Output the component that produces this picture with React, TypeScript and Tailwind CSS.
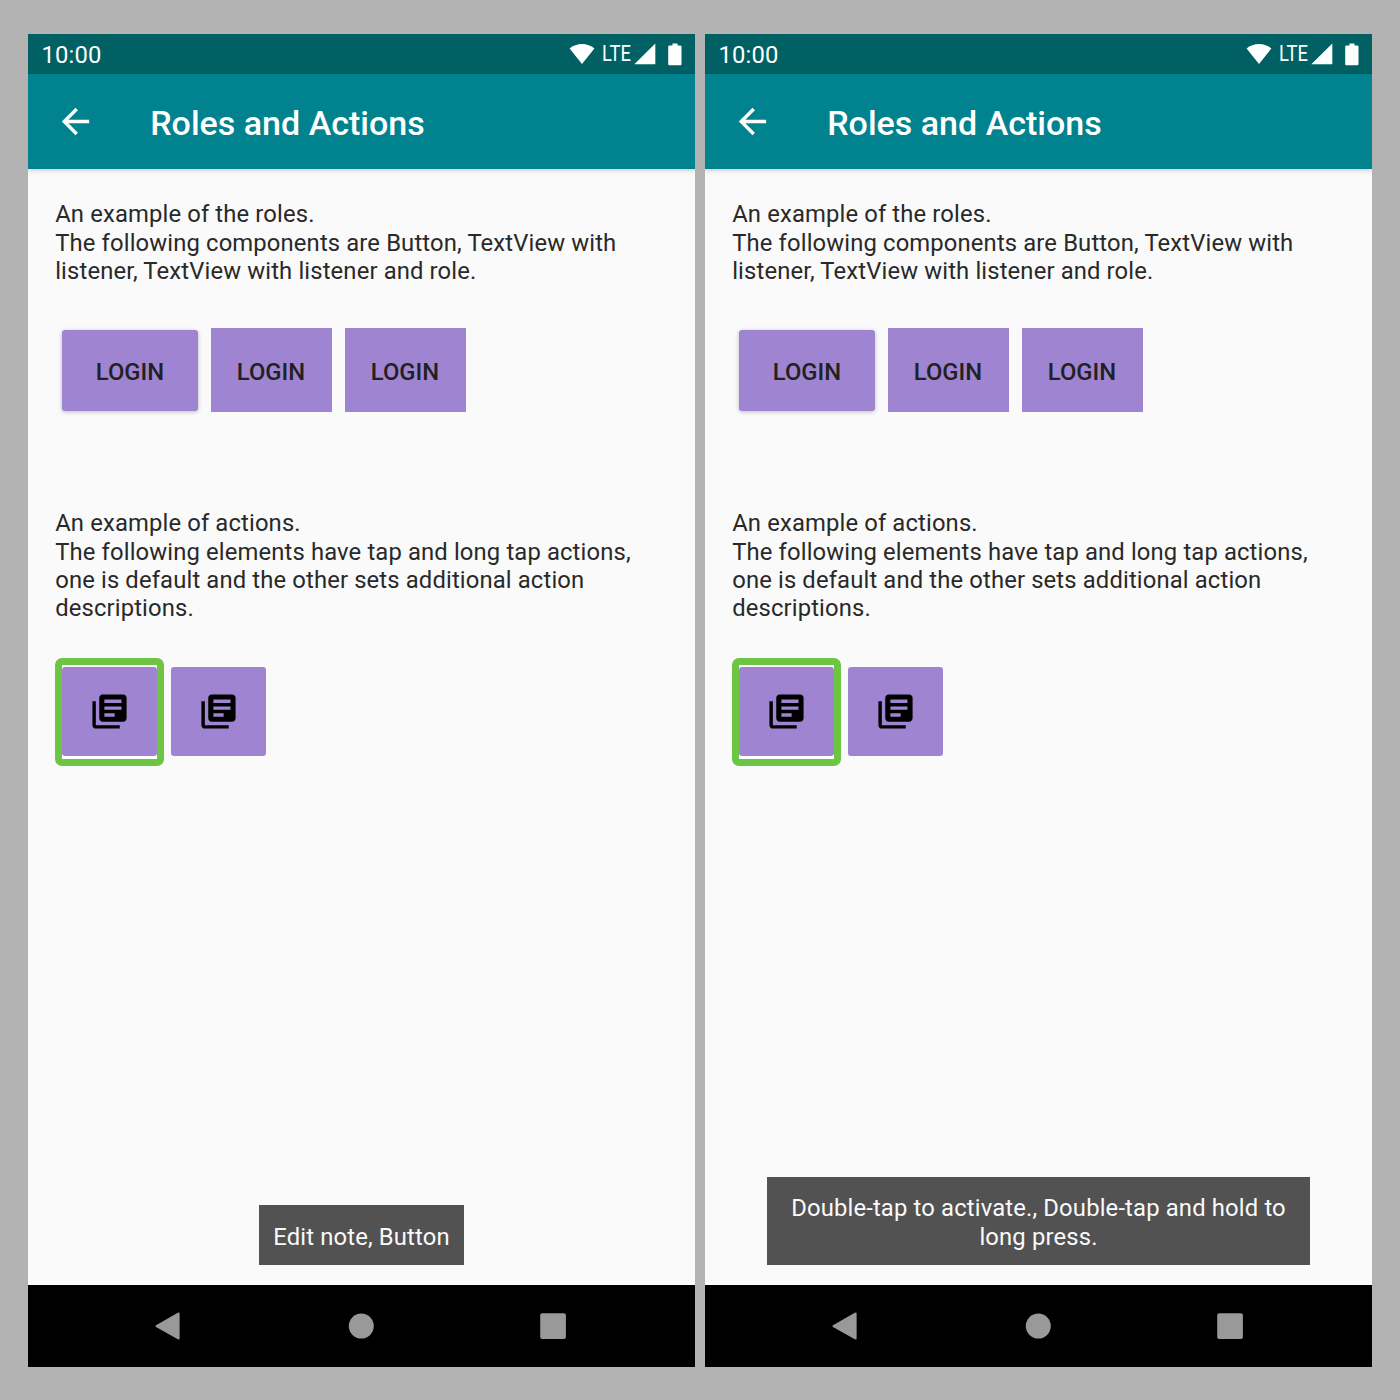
import React from "react";

function StatusBar() {
  return (
    <div className="flex h-[40px] shrink-0 items-center bg-[#006064] pl-[13.5px] pr-[13.5px] text-white">
      <span className="mt-[2px] text-[23.8px] leading-[40px] tracking-[0.14px]">10:00</span>
      <svg className="ml-auto h-[22px] w-[26px]" viewBox="0 0 26 22" fill="currentColor">
        <path d="M0.6 5.5C4 2.4 8.3 0.9 13 0.9s9 1.5 12.4 4.6L13 21z" />
      </svg>
      <span className="ml-[7px] w-[30px] text-[21.4px] leading-[40px]">
        <span className="inline-block origin-left scale-x-[0.86]">LTE</span>
      </span>
      <svg className="ml-[2px] h-[22px] w-[22px]" viewBox="0 0 22 22" fill="currentColor">
        <path d="M0.3 21.3L21.3 0.4V21.3z" />
      </svg>
      <svg className="ml-[12px] h-[23px] w-[14px]" viewBox="0 0 14 23" fill="currentColor">
        <path d="M1.4 2.6H4.5V0.5H9.5V2.6H12.3Q13.5 2.6 13.5 3.8V21Q13.5 22.2 12.3 22.2H1.4Q0.2 22.2 0.2 21V3.8Q0.2 2.6 1.4 2.6z" />
      </svg>
    </div>
  );
}

function AppBar() {
  return (
    <header className="z-10 flex h-[95px] shrink-0 items-center bg-[#00838f] pl-[27px] text-white shadow-[0_1px_5px_rgba(0,0,0,0.22)]">
      <svg className="h-[41px] w-[41px]" viewBox="0 0 24 24" fill="currentColor">
        <path d="M20 11H7.83l5.59-5.59L12 4l-8 8 8 8 1.41-1.41L7.83 13H20v-2z" />
      </svg>
      <h1 className="ml-[54.2px] mt-[3px] text-[34px] font-medium leading-[40px] tracking-[0.01px]">
        Roles and Actions
      </h1>
    </header>
  );
}

function Copy({ lines }: { lines: string[] }) {
  return (
    <p className="whitespace-nowrap text-[23.8px] leading-[28.4px] tracking-[0.14px] text-[#292929]">
      {lines.map((line) => (
        <span key={line} className="block">
          {line}
        </span>
      ))}
    </p>
  );
}

function NotesIcon() {
  return (
    <svg className="h-[41px] w-[41px]" viewBox="0 0 24 24" fill="#000">
      <path d="M4 6H2v14c0 1.1.9 2 2 2h14v-2H4V6zm16-4H8c-1.1 0-2 .9-2 2v12c0 1.1.9 2 2 2h12c1.1 0 2-.9 2-2V4c0-1.1-.9-2-2-2zm-1 9H9V9h10v2zm-4 4H9v-2h6v2zm4-8H9V5h10v2z" />
    </svg>
  );
}

function NavBar() {
  return (
    <nav className="flex h-[82px] shrink-0 items-center bg-black pl-[127px] text-[#999999]">
      <svg className="h-[28px] w-[25px]" viewBox="0 0 25 28" fill="currentColor">
        <path d="M1 13.2L22.8 0.7Q24.6 0 24.6 1.8V26.2Q24.6 28 22.8 27.3L1 14.9Q-0.2 14 1 13.2z" />
      </svg>
      <svg className="ml-[168px] h-[26px] w-[26px]" viewBox="0 0 26 26" fill="currentColor">
        <circle cx="13.3" cy="13.1" r="12.5" />
      </svg>
      <svg className="ml-[166px] h-[26px] w-[26px]" viewBox="0 0 26 26" fill="currentColor">
        <rect x="0.2" y="0.3" width="25.7" height="25.7" rx="2" />
      </svg>
    </nav>
  );
}

function Phone({ toast }: { toast: React.ReactNode }) {
  return (
    <section className="flex h-[1333px] w-[667px] flex-col overflow-hidden bg-[#fafafa]">
      <StatusBar />
      <AppBar />
      <main className="flex min-h-0 flex-1 flex-col pl-[27.2px] pt-[31.3px]">
        <Copy
          lines={[
            "An example of the roles.",
            "The following components are Button, TextView with",
            "listener, TextView with listener and role.",
          ]}
        />
        <div className="mt-[42.7px] flex h-[84px] items-center pl-[6.8px] text-[23.8px] font-medium text-[#212121]">
          <button className="h-[81px] w-[136px] rounded-[3px] bg-[#9f84d1] pt-[5px] shadow-[0_1px_4px_rgba(0,0,0,0.25)]">LOGIN</button>
          <button className="ml-[13px] h-[84px] w-[121px] bg-[#9f84d1] pr-[1px] pt-[5px]">LOGIN</button>
          <button className="ml-[13px] h-[84px] w-[121px] bg-[#9f84d1] pr-[1px] pt-[5px]">LOGIN</button>
        </div>
        <div className="mt-[97px]">
          <Copy
            lines={[
              "An example of actions.",
              "The following elements have tap and long tap actions,",
              "one is default and the other sets additional action",
              "descriptions.",
            ]}
          />
        </div>
        <div className="mt-[35px] flex items-center">
          <div className="flex h-[108px] w-[109px] items-center justify-center rounded-[7px] border-[7px] border-[#6cc644] bg-white">
            <button className="flex h-[89px] w-[95px] shrink-0 items-center justify-center rounded-[3px] bg-[#9f84d1]">
              <NotesIcon />
            </button>
          </div>
          <button className="ml-[7px] flex h-[89px] w-[95px] items-center justify-center rounded-[3px] bg-[#9f84d1]">
            <NotesIcon />
          </button>
        </div>
      </main>
      <div className="mb-[20px] flex shrink-0 justify-center">
        <div className="whitespace-nowrap bg-[#525252] px-[13.8px] pb-[14px] pt-[17.6px] text-center text-[23.8px] leading-[28.4px] tracking-[0.16px] text-[#fafafa]">
          {toast}
        </div>
      </div>
      <NavBar />
    </section>
  );
}

export default function App() {
  return (
    <div className="flex h-[1400px] w-[1400px] gap-[10px] bg-[#b3b3b3] pl-[28px] pt-[34px] font-[Roboto,sans-serif]">
      <Phone toast="Edit note, Button" />
      <Phone
        toast={
          <span className="block w-[515.6px]">
            Double-tap to activate., Double-tap and hold to
            <br />
            long press.
          </span>
        }
      />
    </div>
  );
}
